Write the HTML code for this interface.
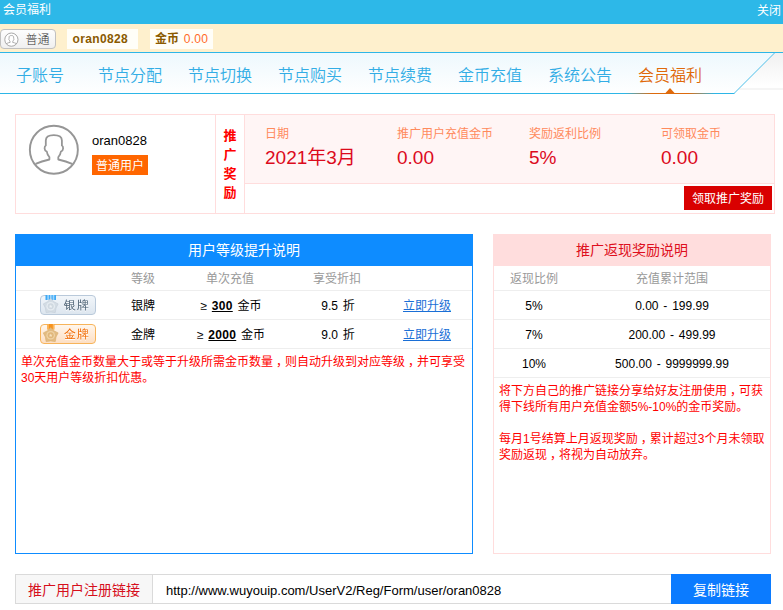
<!DOCTYPE html>
<html lang="zh-CN">
<head>
<meta charset="utf-8">
<title>会员福利</title>
<style>
*{box-sizing:border-box;margin:0;padding:0}
html,body{width:783px;height:610px;overflow:hidden;background:#fff}
body{font-family:"Liberation Sans","Noto Sans CJK SC",sans-serif;font-size:12px;color:#000;position:relative}
.abs{position:absolute}
#title{left:0;top:0;width:783px;height:24px;background:#2db8e8;color:#fff;font-size:12px;line-height:21px}
#title .l{position:absolute;left:3px;top:0}
#title .r{position:absolute;right:2px;top:1px}
#ubar{left:0;top:24px;width:783px;height:28px;background:#fef0cd}
#nav{left:0;top:52px;width:783px;height:42px}
.navitem{position:absolute;top:0;height:42px;line-height:47px;font-size:16px;color:#32ade5;font-weight:350;white-space:nowrap}
#top{left:15px;top:114px;width:760px;height:100px;border:1px solid #ffdddd;background:#fff}
.lbl{position:absolute;top:12px;font-size:12px;line-height:14px;color:#ff8a5c;white-space:nowrap}
.val{position:absolute;top:30px;font-size:19px;line-height:26px;color:#dc0a1c;white-space:nowrap}
#lp{left:15px;top:234px;width:458px;height:320px;border:1px solid #0e8cff;background:#fff}
#rp{left:493px;top:234px;width:278px;height:320px;border:1px solid #ffdddd;background:#fff}
.row{position:absolute;left:0;right:0;height:29px;border-bottom:1px solid #eee;line-height:30px;font-size:12px;word-spacing:1.5px}
.row b{letter-spacing:.3px}
.row span{position:absolute;top:0;white-space:nowrap;transform:translateX(-50%)}
.bdg{position:absolute;left:24px;width:56px;height:20px;border-radius:4px;font-family:"WenQuanYi Zen Hei","Liberation Sans","Noto Sans CJK SC",sans-serif;font-size:12px;line-height:19px;letter-spacing:1px;text-shadow:0 1px 0 #fff}
.bdg i{position:absolute;left:23px;top:0;font-style:normal;white-space:nowrap}
.bdg.s{border:1px solid #b9c9da;background:linear-gradient(#f2f6fa,#dde6ef);color:#4a6073}
.bdg.gd{border:1px solid #f7b45a;background:linear-gradient(#fff6ec,#fddfc4);color:#f26a00}
.c{position:relative;left:3px}
.g{color:#999}
.note{position:absolute;color:#f00;font-size:12px;line-height:16px}
</style>
</head>
<body>
<div id="title" class="abs"><span class="l">会员福利</span><span class="r">关闭</span></div>
<div id="ubar" class="abs">
  <div class="abs" style="left:0px;top:5px;width:56px;height:20px;border:1px solid #c0c0c0;border-radius:4px;background:linear-gradient(#fdfdfd,#f0f0f0);"></div>
  <svg class="abs" style="left:2.600px;top:6.550px" width="16.870" height="16.870" viewBox="0 0 60 60"><circle cx="29.85" cy="30.75" r="23.500" fill="#fff" stroke="#9e9e9e" stroke-width="3.200"/><path d="M11.600 44.900C16 42.800 21 41.400 25.400 40.500V38.100C24 36.900 23.200 35 22.800 32.700C21.400 32.300 20.700 31.300 20.600 29.500C20.500 27.900 20.900 26.900 21.800 26.500V21.500C21.800 18 24.500 16.200 29.850 16.200C35.200 16.200 37.900 18 37.900 21.500V26.500C38.800 26.900 39.200 27.900 39.100 29.500C39 31.300 38.300 32.300 36.900 32.700C36.500 35 35.700 36.900 34.300 38.100V40.500C38.700 41.400 43.700 42.800 48.100 44.900" fill="none" stroke="#9e9e9e" stroke-width="3" stroke-linejoin="round"/></svg>
  <span class="abs" style="left:25.500px;top:6px;font-size:12px;line-height:20px;color:#333;font-weight:300">普通</span>
  <div class="abs" style="left:67px;top:5px;width:71px;height:20px;background:#fffef8;color:#8a5a00;font-weight:bold;font-size:12px;line-height:20px;padding-left:5.500px;letter-spacing:.35px">oran0828</div>
  <div class="abs" style="left:150px;top:5px;width:63px;height:20px;background:#fffef8;color:#8a5a00;font-weight:bold;font-size:12px;line-height:20px;padding-left:5px;white-space:nowrap">金币 <span style="color:#ff6a2a;font-weight:normal;margin-left:1.500px;letter-spacing:.2px">0.00</span></div>
</div>
<div id="nav" class="abs">
  <svg class="abs" style="left:0;top:0" width="783" height="42" viewBox="0 0 783 42">
    <defs>
      <linearGradient id="ng" x1="0" y1="0" x2="0" y2="1"><stop offset="0" stop-color="#edf8fd"/><stop offset="1" stop-color="#ffffff"/></linearGradient>
      <linearGradient id="gg" x1="0" y1="0" x2="0" y2="1"><stop offset="0" stop-color="#f0f0f0"/><stop offset=".8" stop-color="#ffffff"/><stop offset="1" stop-color="#ffffff"/></linearGradient>
      <linearGradient id="og" x1="0" y1="0" x2="1" y2="0"><stop offset="0" stop-color="#2db6e7"/><stop offset=".3" stop-color="#dd6a0c"/><stop offset=".7" stop-color="#dd6a0c"/><stop offset="1" stop-color="#2db6e7"/></linearGradient>
    </defs>
    <rect x="0" y="0" width="783" height="42" fill="url(#gg)"/>
    <rect x="730" y="36" width="53" height="2" fill="#f5f5f5"/>
    <polygon points="0,0 775,0 734,42 0,42" fill="url(#ng)"/>
    <rect x="0" y="0" width="783" height="1" fill="#2db6e7"/>
    <rect x="0" y="41" width="734.500" height="1" fill="#2db6e7"/>
    <rect x="625" y="41" width="90" height="1" fill="url(#og)"/>
    <line x1="734" y1="41.500" x2="775" y2="0.500" stroke="#4dbfe9" stroke-width="1"/>
    <polygon points="665.500,41 674.500,41 670,36" fill="#e0690a"/>
  </svg>
  <span class="navitem" style="left:16px">子账号</span>
  <span class="navitem" style="left:98px">节点分配</span>
  <span class="navitem" style="left:188px">节点切换</span>
  <span class="navitem" style="left:278px">节点购买</span>
  <span class="navitem" style="left:368px">节点续费</span>
  <span class="navitem" style="left:458px">金币充值</span>
  <span class="navitem" style="left:548px">系统公告</span>
  <span class="navitem" style="left:638px;color:#e0690a">会员福利</span>
</div>

<div id="top" class="abs">
  <svg class="abs" style="left:8px;top:4px" width="60" height="60" viewBox="0 0 60 60"><circle cx="29.85" cy="30.75" r="24" fill="#fff" stroke="#969696" stroke-width="1.900"/><path d="M11.600 44.900C16 42.800 21 41.400 25.400 40.500V38.100C24 36.900 23.200 35 22.800 32.700C21.400 32.300 20.700 31.300 20.600 29.500C20.500 27.900 20.900 26.900 21.800 26.500V21.500C21.800 18 24.500 16.200 29.850 16.200C35.200 16.200 37.900 18 37.900 21.500V26.500C38.800 26.900 39.200 27.900 39.100 29.500C39 31.300 38.300 32.300 36.900 32.700C36.500 35 35.700 36.900 34.300 38.100V40.500C38.700 41.400 43.700 42.800 48.100 44.900" fill="none" stroke="#969696" stroke-width="1.800" stroke-linejoin="round"/></svg>
  <span class="abs" style="left:76px;top:17px;font-size:13px;line-height:18px;color:#000">oran0828</span>
  <span class="abs" style="left:76px;top:40px;width:56px;height:20px;background:#ff6600;color:#fff;font-size:12px;line-height:23px;text-align:center;overflow:hidden">普通用户</span>
  <div class="abs" style="left:199px;top:0;width:1px;height:98px;background:#ffdddd"></div>
  <div class="abs" style="left:200px;top:11px;width:28px;text-align:center;color:#f00;font-weight:bold;font-size:13px;line-height:19px">推<br>广<br>奖<br>励</div>
  <div class="abs" style="left:228px;top:0;width:1px;height:98px;background:#ffdddd"></div>
  <div class="abs" style="left:229px;top:0;width:529px;height:68px;background:#fff5f5"></div>
  <div class="abs" style="left:229px;top:68px;width:529px;height:1px;background:#ffdddd"></div>
  <span class="lbl" style="left:249px">日期</span><span class="val" style="left:249px">2021年3月</span>
  <span class="lbl" style="left:381px">推广用户充值金币</span><span class="val" style="left:381px">0.00</span>
  <span class="lbl" style="left:513px">奖励返利比例</span><span class="val" style="left:513px">5%</span>
  <span class="lbl" style="left:645px">可领取金币</span><span class="val" style="left:645px">0.00</span>
  <div class="abs" style="left:668px;top:71px;width:88px;height:24px;background:#d90000;color:#fff;font-size:12px;line-height:27px;text-align:center">领取推广奖励</div>
</div>

<div id="lp" class="abs">
  <div class="abs" style="left:0;top:0;width:456px;height:31px;background:#0e8cff;color:#fff;font-size:14px;line-height:31px;text-align:center">用户等级提升说明</div>
  <div class="row g" style="top:31px;height:25px;line-height:27px"><span style="left:127px">等级</span><span style="left:214px">单次充值</span><span style="left:321px">享受折扣</span></div>
  <div class="row" style="top:56px"><div class="bdg s" style="top:4px"><svg class="abs" style="left:1px;top:-1px" width="18" height="20" viewBox="0 0 18 20">
<rect x="3.500" y="0" width="10.500" height="5" fill="#3fa9f5"/><rect x="5.300" y="0" width="1.600" height="5" fill="#9dd4fb"/><rect x="8" y="0" width="1.600" height="5" fill="#9dd4fb"/><rect x="10.700" y="0" width="1.600" height="5" fill="#9dd4fb"/>
<polygon points="8.70,3.50 11.99,6.77 16.12,8.89 14.03,13.03 13.28,17.61 8.70,16.90 4.12,17.61 3.37,13.03 1.28,8.89 5.41,6.77" fill="#d3dce4" stroke="#c2ccd6" stroke-width=".6" stroke-linejoin="round"/>
<circle cx="8.700" cy="11.300" r="4.300" fill="#e6ecf1"/><circle cx="8.700" cy="11.300" r="3" fill="#cfd8e0"/>
<polygon points="8.70,9.40 9.23,10.67 10.60,10.78 9.56,11.68 9.88,13.02 8.70,12.30 7.52,13.02 7.84,11.68 6.80,10.78 8.17,10.67" fill="#eef2f6"/></svg><i>银牌</i></div><span style="left:127px">银牌</span><span style="left:215px">≥ <b style="text-decoration:underline">300</b> 金币</span><span style="left:322px">9.5 折</span><span style="left:411px;color:#1a6fd6;text-decoration:underline">立即升级</span></div>
  <div class="row" style="top:85px"><div class="bdg gd" style="top:4px"><svg class="abs" style="left:1px;top:-1px" width="18" height="20" viewBox="0 0 18 20">
<rect x="5.300" y="0" width="7" height="5.500" fill="#f7931e"/><rect x="5.300" y="0" width="1.500" height="5.500" fill="#fbb860"/><rect x="10.800" y="0" width="1.500" height="5.500" fill="#fbb860"/>
<polygon points="8.70,3.50 11.99,6.77 16.12,8.89 14.03,13.03 13.28,17.61 8.70,16.90 4.12,17.61 3.37,13.03 1.28,8.89 5.41,6.77" fill="#e2bb82" stroke="#d8ac6c" stroke-width=".6" stroke-linejoin="round"/>
<circle cx="8.700" cy="11.300" r="4.300" fill="#efd2a4"/><circle cx="8.700" cy="11.300" r="3" fill="#e0b67a"/>
<polygon points="8.70,9.40 9.23,10.67 10.60,10.78 9.56,11.68 9.88,13.02 8.70,12.30 7.52,13.02 7.84,11.68 6.80,10.78 8.17,10.67" fill="#f7e3c0"/></svg><i>金牌</i></div><span style="left:127px">金牌</span><span style="left:215px">≥ <b style="text-decoration:underline">2000</b> 金币</span><span style="left:322px">9.0 折</span><span style="left:411px;color:#1a6fd6;text-decoration:underline">立即升级</span></div>
  <div class="note" style="left:5px;top:119px;width:450px">单次充值金币数量大于或等于升级所需金币数量<span class="c">，</span>则自动升级到对应等级<span class="c">，</span>并可享受30天用户等级折扣优惠。</div>
</div>

<div id="rp" class="abs">
  <div class="abs" style="left:0;top:0;width:276px;height:31px;background:#ffdddd;color:#de0f20;font-size:14px;line-height:31px;text-align:center">推广返现奖励说明</div>
  <div class="row g" style="top:31px;height:25px;line-height:27px"><span style="left:40px">返现比例</span><span style="left:178px">充值累计范围</span></div>
  <div class="row" style="top:56px"><span style="left:40px">5%</span><span style="left:178px">0.00 - 199.99</span></div>
  <div class="row" style="top:85px"><span style="left:40px">7%</span><span style="left:178px">200.00 - 499.99</span></div>
  <div class="row" style="top:114px"><span style="left:40px">10%</span><span style="left:178px">500.00 - 9999999.99</span></div>
  <div class="note" style="left:5px;top:148px;width:270px">将下方自己的推广链接分享给好友注册使用<span class="c">，</span>可获得下线所有用户充值金额5%-10%的金币奖励。<br><br>每月1号结算上月返现奖励<span class="c">，</span>累计超过3个月未领取奖励返现<span class="c">，</span>将视为自动放弃。</div>
</div>

<div class="abs" style="left:15px;top:574px;width:138px;height:30px;border:1px solid #dadada;background:#f7f7f7;color:#d60f1c;font-size:14px;line-height:30px;text-align:center">推广用户注册链接</div>
<div class="abs" style="left:153px;top:574px;width:518px;height:30px;border-top:1px solid #dadada;border-bottom:1px solid #dadada;background:#fff;color:#000;font-size:13px;line-height:32px;padding-left:13px">http://www.wuyouip.com/UserV2/Reg/Form/user/oran0828</div>
<div class="abs" style="left:671px;top:574px;width:100px;height:30px;background:#0b7bff;color:#fff;font-size:14px;line-height:32px;text-align:center">复制链接</div>
</body>
</html>
